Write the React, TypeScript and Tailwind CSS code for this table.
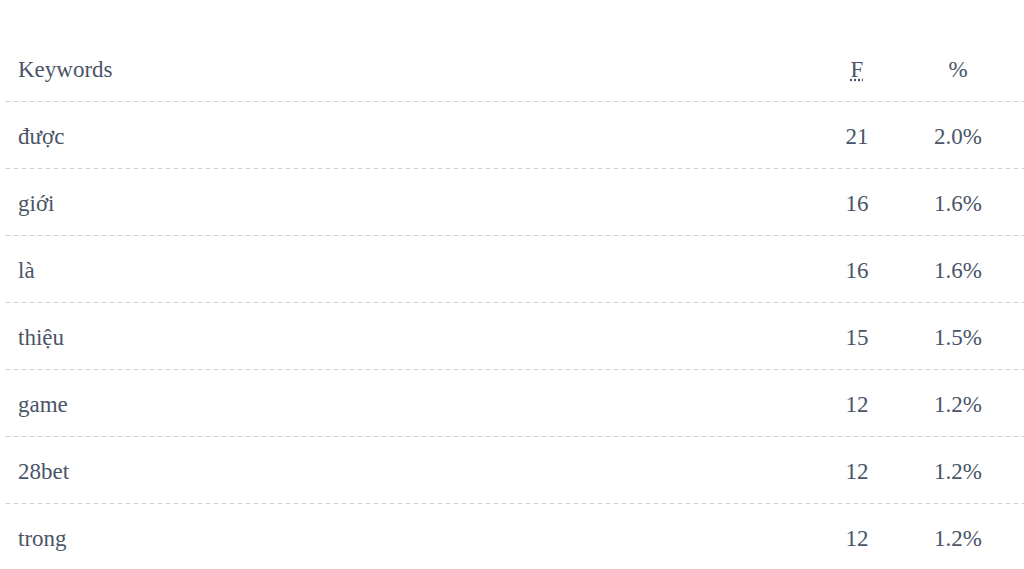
import React from 'react'

const rows = [
  { word: 'được', f: 21, pct: '2.0%' },
  { word: 'giới', f: 16, pct: '1.6%' },
  { word: 'là', f: 16, pct: '1.6%' },
  { word: 'thiệu', f: 15, pct: '1.5%' },
  { word: 'game', f: 12, pct: '1.2%' },
  { word: '28bet', f: 12, pct: '1.2%' },
  { word: 'trong', f: 12, pct: '1.2%' },
]

// dashed separator drawn as a repeating gradient (longer dashes than border-dashed)
const dash =
  'bg-[linear-gradient(to_right,#d0d3d8_5px,transparent_5px)] bg-[length:8px_1px] bg-repeat-x bg-bottom'

export default function App() {
  return (
    <div className="min-h-screen bg-white pt-[35px] pl-[3px] text-[#4a5568] text-[23px] font-[Liberation_Serif,Times_New_Roman,serif]">
      <div className={`grid grid-cols-[1fr_70px_132px] items-center h-[67px] pt-[4px] ${dash}`}>
        <div className="pl-[15px]">Keywords</div>
        <div className="text-center">
          <abbr title="Frequency">F</abbr>
        </div>
        <div className="text-center">%</div>
      </div>
      {rows.map((r, i) => (
        <div
          key={r.word}
          className={`grid grid-cols-[1fr_70px_132px] items-center h-[67px] pt-[4px] ${i < rows.length - 1 ? dash : ''}`}
        >
          <div className="pl-[15px]">{r.word}</div>
          <div className="text-center">{r.f}</div>
          <div className="text-center">{r.pct}</div>
        </div>
      ))}
    </div>
  )
}
